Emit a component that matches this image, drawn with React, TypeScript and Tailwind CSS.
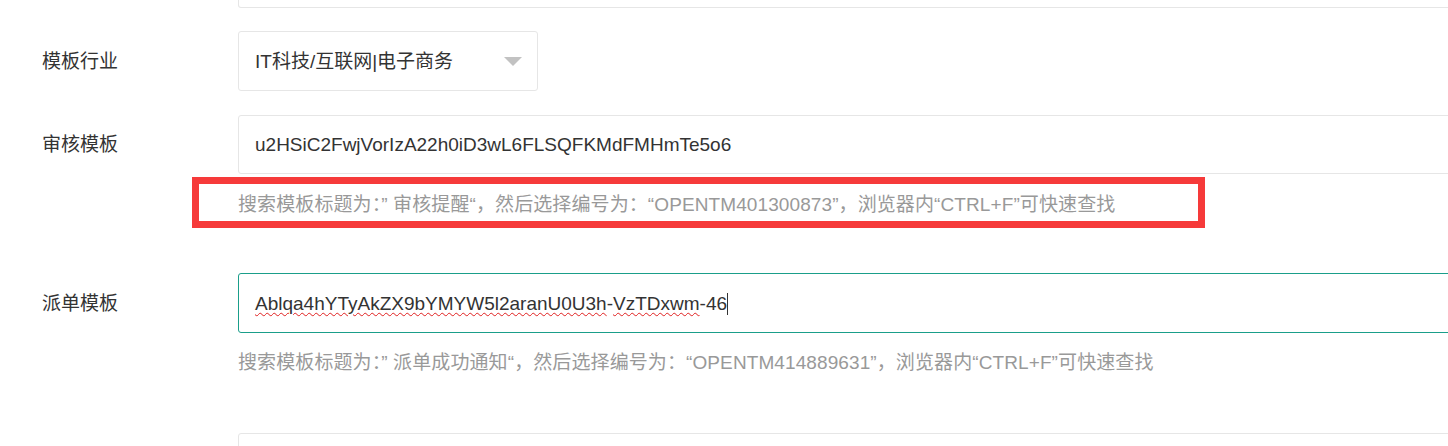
const font = { fontFamily: '"Liberation Sans", "Noto Sans CJK SC", sans-serif' };

const Label = ({ children }: { children: string }) => (
  <div className="w-[238px] shrink-0 pl-[42px] pt-[2px] text-[19px] text-[#333]">{children}</div>
);

export default function App() {
  return (
    <div className="w-full h-[446px] overflow-hidden bg-white" style={font}>
      {/* top input, cut off by the window */}
      <div className="flex">
        <div className="w-[238px] shrink-0" />
        <div className="w-[1240px] shrink-0 h-[8px] border-x border-b border-[#e6e6e6] rounded-b-[3px]" />
      </div>

      {/* 模板行业 */}
      <div className="flex items-center mt-[23px]">
        <Label>模板行业</Label>
        <div className="w-[300px] h-[60px] shrink-0 flex items-center justify-between border border-[#e6e6e6] rounded-[3px] pl-[16px] pr-[15px] bg-white">
          <span className="text-[19px] text-[#333] pt-[2px]">IT科技/互联网|电子商务</span>
          <span className="w-0 h-0 border-x-[9px] border-x-transparent border-t-[9px] border-t-[#c2c2c2]" />
        </div>
      </div>

      {/* 审核模板 */}
      <div className="flex items-center mt-[24px]">
        <Label>审核模板</Label>
        <div className="w-[1240px] h-[59px] shrink-0 flex items-center border border-[#e6e6e6] rounded-[3px] pl-[16px]">
          <span className="text-[19px] text-[#333] pt-[2px]">u2HSiC2FwjVorIzA22h0iD3wL6FLSQFKMdFMHmTe5o6</span>
        </div>
      </div>

      <div className="ml-[192px] mt-[3px] w-[1013px] h-[51px] border-[7px] border-[#f63a3a] flex items-center pl-[39px] pt-[5px]">
        <span className="text-[19px] text-[#999] whitespace-nowrap tracking-[0.1px]">
          搜索模板标题为：” 审核提醒“，然后选择编号为：“OPENTM401300873”，浏览器内“CTRL+F”可快速查找
        </span>
      </div>

      {/* 派单模板 */}
      <div className="flex items-center mt-[45px]">
        <Label>派单模板</Label>
        <div className="w-[1240px] h-[60px] shrink-0 flex items-center border border-[#1a9e8a] rounded-[3px] pl-[16px]">
          <span className="text-[19px] text-[#333] whitespace-nowrap pt-[2px]">
            <span className="underline decoration-wavy decoration-[#e02020] decoration-1 underline-offset-[2px]">Ablqa4hYTyAkZX9bYMYW5l2aranU0U3h</span>
            -
            <span className="underline decoration-wavy decoration-[#e02020] decoration-1 underline-offset-[2px]">VzTDxwm</span>
            -46
          </span>
          <span className="w-px h-[22px] bg-[#333] mt-[2px]" />
        </div>
      </div>

      <div className="ml-[238px] mt-[17px] h-[26px] flex items-center">
        <span className="text-[19px] text-[#999] whitespace-nowrap tracking-[0.1px]">
          搜索模板标题为：” 派单成功通知“，然后选择编号为：“OPENTM414889631”，浏览器内“CTRL+F”可快速查找
        </span>
      </div>

      <div className="flex mt-[57px]">
        <div className="w-[238px] shrink-0" />
        <div className="w-[1240px] shrink-0 h-[40px] border border-[#e6e6e6] rounded-t-[3px]" />
      </div>
    </div>
  );
}
